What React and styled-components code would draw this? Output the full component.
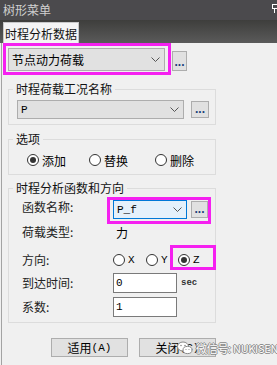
import React from "react";
import styled, { createGlobalStyle } from "styled-components";

const GlobalStyle = createGlobalStyle`
  html, body {
    margin: 0;
    padding: 0;
    background: #f0f0f0;
  }
  body {
    font-family: "Noto Sans CJK SC", "Noto Sans", sans-serif;
    font-size: 12px;
    color: #000;
  }
`;

const Window = styled.div`
  width: 277px;
  height: 365px;
  position: relative;
  overflow: hidden;
  display: flex;
  flex-direction: column;
  background: #f0f0f0;
`;

const TitleBar = styled.div`
  height: 20px;
  flex: none;
  background: #4b4a4d;
  color: #d0d0d0;
  padding-left: 3px;
  display: flex;
  align-items: center;
  justify-content: space-between;
  font-size: 12px;
  line-height: 20px;
`;

const TabStrip = styled.div`
  height: 23px;
  flex: none;
  background: linear-gradient(#3e3e3c, #5a5a5a);
  padding-left: 3px;
  display: flex;
  align-items: flex-end;
  box-sizing: border-box;
`;

const Tab = styled.div`
  width: 76px;
  height: 21px;
  box-sizing: border-box;
  background: #f4f4f4;
  border: 1px solid #c8c8c8;
  border-bottom: none;
  display: flex;
  align-items: center;
  justify-content: center;
  color: #111;
`;

const Panel = styled.div`
  flex: 1;
  margin-left: 1px;
  border-left: 1px solid #a3a3a3;
  display: flex;
  flex-direction: column;
`;

const Highlight = styled.div`
  border: 3px solid #f520f0;
  padding: ${(p) => p.$pad};
  display: flex;
  align-items: flex-start;
  box-sizing: border-box;
  width: ${(p) => p.$w}px;
  height: ${(p) => p.$h}px;
  margin: ${(p) => p.$m || "0"};
`;

const TopRow = styled.div`
  display: flex;
  align-items: flex-start;
  margin-left: 1px;
`;

const Select = styled.div`
  width: ${(p) => p.$w}px;
  height: ${(p) => p.$h}px;
  box-sizing: border-box;
  background: ${(p) => (p.$focus ? "#e5f1fb" : "#e1e1e1")};
  border: 1px solid ${(p) => (p.$focus ? "#0078d7" : "#adadad")};
  display: flex;
  align-items: center;
  justify-content: space-between;
  padding: 0 4px 0 3px;
  font-family: ${(p) =>
    p.$mono ? '"Liberation Mono", monospace' : '"Noto Sans CJK SC", sans-serif'};
  font-size: ${(p) => (p.$mono ? "11px" : "12px")};
`;

const DotsButton = styled.div`
  width: ${(p) => p.$w}px;
  height: ${(p) => p.$h}px;
  margin: ${(p) => p.$m};
  box-sizing: border-box;
  background: #e1e1e1;
  border: 1px solid #adadad;
  display: flex;
  align-items: flex-end;
  justify-content: center;
  font-family: "Liberation Sans", sans-serif;
  font-size: 12px;
  font-weight: bold;
  line-height: 12px;
  padding-bottom: 2px;
  color: #20407a;
`;

const Group = styled.fieldset`
  margin: ${(p) => p.$mt}px 0 0 6px;
  width: 208px;
  box-sizing: border-box;
  border: 1px solid #dcdcdc;
  padding: 0;
  min-width: 0;
`;

const Legend = styled.legend`
  margin-left: 4px;
  padding: 0 3px;
  font-size: 12px;
  line-height: 14px;
  color: #111;
`;

const GroupBody = styled.div`
  padding: ${(p) => p.$pad};
  display: flex;
  flex-direction: ${(p) => (p.$col ? "column" : "row")};
  align-items: flex-start;
`;

const RadioOption = styled.label`
  display: flex;
  align-items: center;
  gap: 3px;
  width: ${(p) => (p.$w ? `${p.$w}px` : "auto")};
  height: 16px;
  flex: none;
  margin-top: ${(p) => p.$mt || 0}px;
  font-family: ${(p) =>
    p.$mono ? '"Liberation Mono", monospace' : '"Noto Sans CJK SC", sans-serif'};
  font-size: ${(p) => (p.$mono ? "11px" : "12px")};
`;

const Circle = styled.span`
  width: 12px;
  height: 12px;
  box-sizing: border-box;
  border-radius: 50%;
  border: 1px solid #333;
  background: #fff;
  display: flex;
  align-items: center;
  justify-content: center;
  &::after {
    content: "";
    width: 6px;
    height: 6px;
    border-radius: 50%;
    background: ${(p) => (p.$on ? "#333" : "transparent")};
  }
`;

const FormRow = styled.div`
  display: flex;
  align-items: ${(p) => p.$align || "center"};
  height: ${(p) => p.$h}px;
  margin-top: ${(p) => p.$mt || 0}px;
`;

const Label = styled.div`
  width: 85px;
  flex: none;
  line-height: 16px;
  margin-top: ${(p) => p.$mt || 0}px;
  color: #222;
`;

const Control = styled.div`
  display: flex;
  align-items: ${(p) => p.$align || "center"};
  padding-left: ${(p) => p.$pl || 0}px;
`;

const TextInput = styled.div`
  width: 64px;
  height: 20px;
  box-sizing: border-box;
  background: #fff;
  border: 1px solid #7a7a7a;
  padding-left: 2px;
  display: flex;
  align-items: center;
  font-family: "Liberation Mono", monospace;
  font-size: 11px;
`;

const Unit = styled.span`
  margin-left: 4px;
  font-family: "Liberation Mono", monospace;
  font-size: 9px;
  font-weight: bold;
  color: #333;
`;

const ButtonRow = styled.div`
  display: flex;
  gap: 11px;
  margin: 15px 0 0 49px;
`;

const Button = styled.div`
  width: 77px;
  height: 19px;
  box-sizing: border-box;
  background: #e1e1e1;
  border: 1px solid #adadad;
  display: flex;
  align-items: center;
  justify-content: center;
  font-size: 12px;
  span {
    font-family: "Liberation Mono", monospace;
    font-size: 11px;
  }
`;

const Watermark = styled.div`
  position: absolute;
  left: 177px;
  top: 340px;
  display: flex;
  align-items: center;
  gap: 3px;
  white-space: nowrap;
  color: #fff;
  font-family: "Noto Sans CJK SC", sans-serif;
  font-size: 11px;
  letter-spacing: -0.3px;
  text-shadow: 1px 0 #8a8a8a, -1px 0 #8a8a8a, 0 1px #8a8a8a, 0 -1px #8a8a8a;
`;

const Chevron = () => (
  <svg width="9" height="5" viewBox="0 0 9 5">
    <polyline points="0.5,0.5 4.5,4.5 8.5,0.5" fill="none" stroke="#555" strokeWidth="1" />
  </svg>
);

const Pin = () => (
  <svg width="5" height="9" viewBox="0 0 5 9" style={{ marginTop: -3 }}>
    <rect x="0.5" y="0.5" width="6" height="4" fill="none" stroke="#fff" />
    <line x1="2.5" y1="4.5" x2="2.5" y2="9" stroke="#fff" />
  </svg>
);

const WeChat = () => (
  <svg width="16" height="14" viewBox="0 0 16 14">
    <ellipse cx="6" cy="5.5" rx="5.5" ry="4.5" fill="#fff" stroke="#8a8a8a" />
    <ellipse cx="10.5" cy="9" rx="4.5" ry="3.6" fill="#fff" stroke="#8a8a8a" />
    <circle cx="4" cy="4.5" r="0.8" fill="#8a8a8a" />
    <circle cx="8" cy="4.5" r="0.8" fill="#8a8a8a" />
    <circle cx="9" cy="8.5" r="0.6" fill="#8a8a8a" />
    <circle cx="12" cy="8.5" r="0.6" fill="#8a8a8a" />
  </svg>
);

function Radio({ on, children, ...rest }) {
  return (
    <RadioOption {...rest}>
      <Circle $on={on} />
      {children}
    </RadioOption>
  );
}

export default function App() {
  return (
    <Window>
      <GlobalStyle />
      <TitleBar>
        树形菜单
        <Pin />
      </TitleBar>
      <TabStrip>
        <Tab>时程分析数据</Tab>
      </TabStrip>
      <Panel>
        <TopRow>
          <Highlight $w={168} $h={32} $pad="2px 3px 1px 2px">
            <Select $w={157} $h={23}>
              节点动力荷载
              <Chevron />
            </Select>
          </Highlight>
          <DotsButton $w={15} $h={20} $m="8px 0 0 1px">...</DotsButton>
        </TopRow>

        <Group $mt={7}>
          <Legend>时程荷载工况名称</Legend>
          <GroupBody $pad="4px 0 5px 8px">
            <Select $w={167} $h={19} $mono>
              P
              <Chevron />
            </Select>
            <DotsButton $w={18} $h={17} $m="1px 0 0 7px">...</DotsButton>
          </GroupBody>
        </Group>

        <Group $mt={7}>
          <Legend>选项</Legend>
          <GroupBody $pad="6px 0 6px 18px">
            <Radio on $w={62}>添加</Radio>
            <Radio $w={66}>替换</Radio>
            <Radio>删除</Radio>
          </GroupBody>
        </Group>

        <Group $mt={6}>
          <Legend>时程分析函数和方向</Legend>
          <GroupBody $pad="2px 0 5px 13px" $col>
            <FormRow $h={27} $align="flex-start">
              <Label $mt={2}>函数名称:</Label>
              <Highlight $w={104} $h={27} $pad="0 0 2px 3px">
                <Select $w={74} $h={19} $focus $mono>
                  P_f
                  <Chevron />
                </Select>
                <DotsButton $w={17} $h={17} $m="1px 0 0 4px">...</DotsButton>
              </Highlight>
            </FormRow>
            <FormRow $h={16}>
              <Label>荷载类型:</Label>
              <Control $pl={9}>力</Control>
            </FormRow>
            <FormRow $h={25} $mt={5} $align="flex-start">
              <Label $mt={7}>方向:</Label>
              <Control $pl={6} $align="flex-start">
                <Radio $w={33} $mt={7} $mono>X</Radio>
                <Radio $w={24} $mt={7} $mono>Y</Radio>
                <Highlight $w={46} $h={25} $pad="4px 0 0 5px">
                  <Radio on $mono>Z</Radio>
                </Highlight>
              </Control>
            </FormRow>
            <FormRow $h={20} $mt={3}>
              <Label>到达时间:</Label>
              <Control $pl={6}>
                <TextInput>0</TextInput>
                <Unit>sec</Unit>
              </Control>
            </FormRow>
            <FormRow $h={20} $mt={4}>
              <Label>系数:</Label>
              <Control $pl={6}>
                <TextInput>1</TextInput>
              </Control>
            </FormRow>
          </GroupBody>
        </Group>

        <ButtonRow>
          <Button>
            适用<span>(A)</span>
          </Button>
          <Button>
            关闭<span>(C)</span>
          </Button>
        </ButtonRow>
      </Panel>
      <Watermark>
        <WeChat />
        微信号: NUKISEN
      </Watermark>
    </Window>
  );
}
